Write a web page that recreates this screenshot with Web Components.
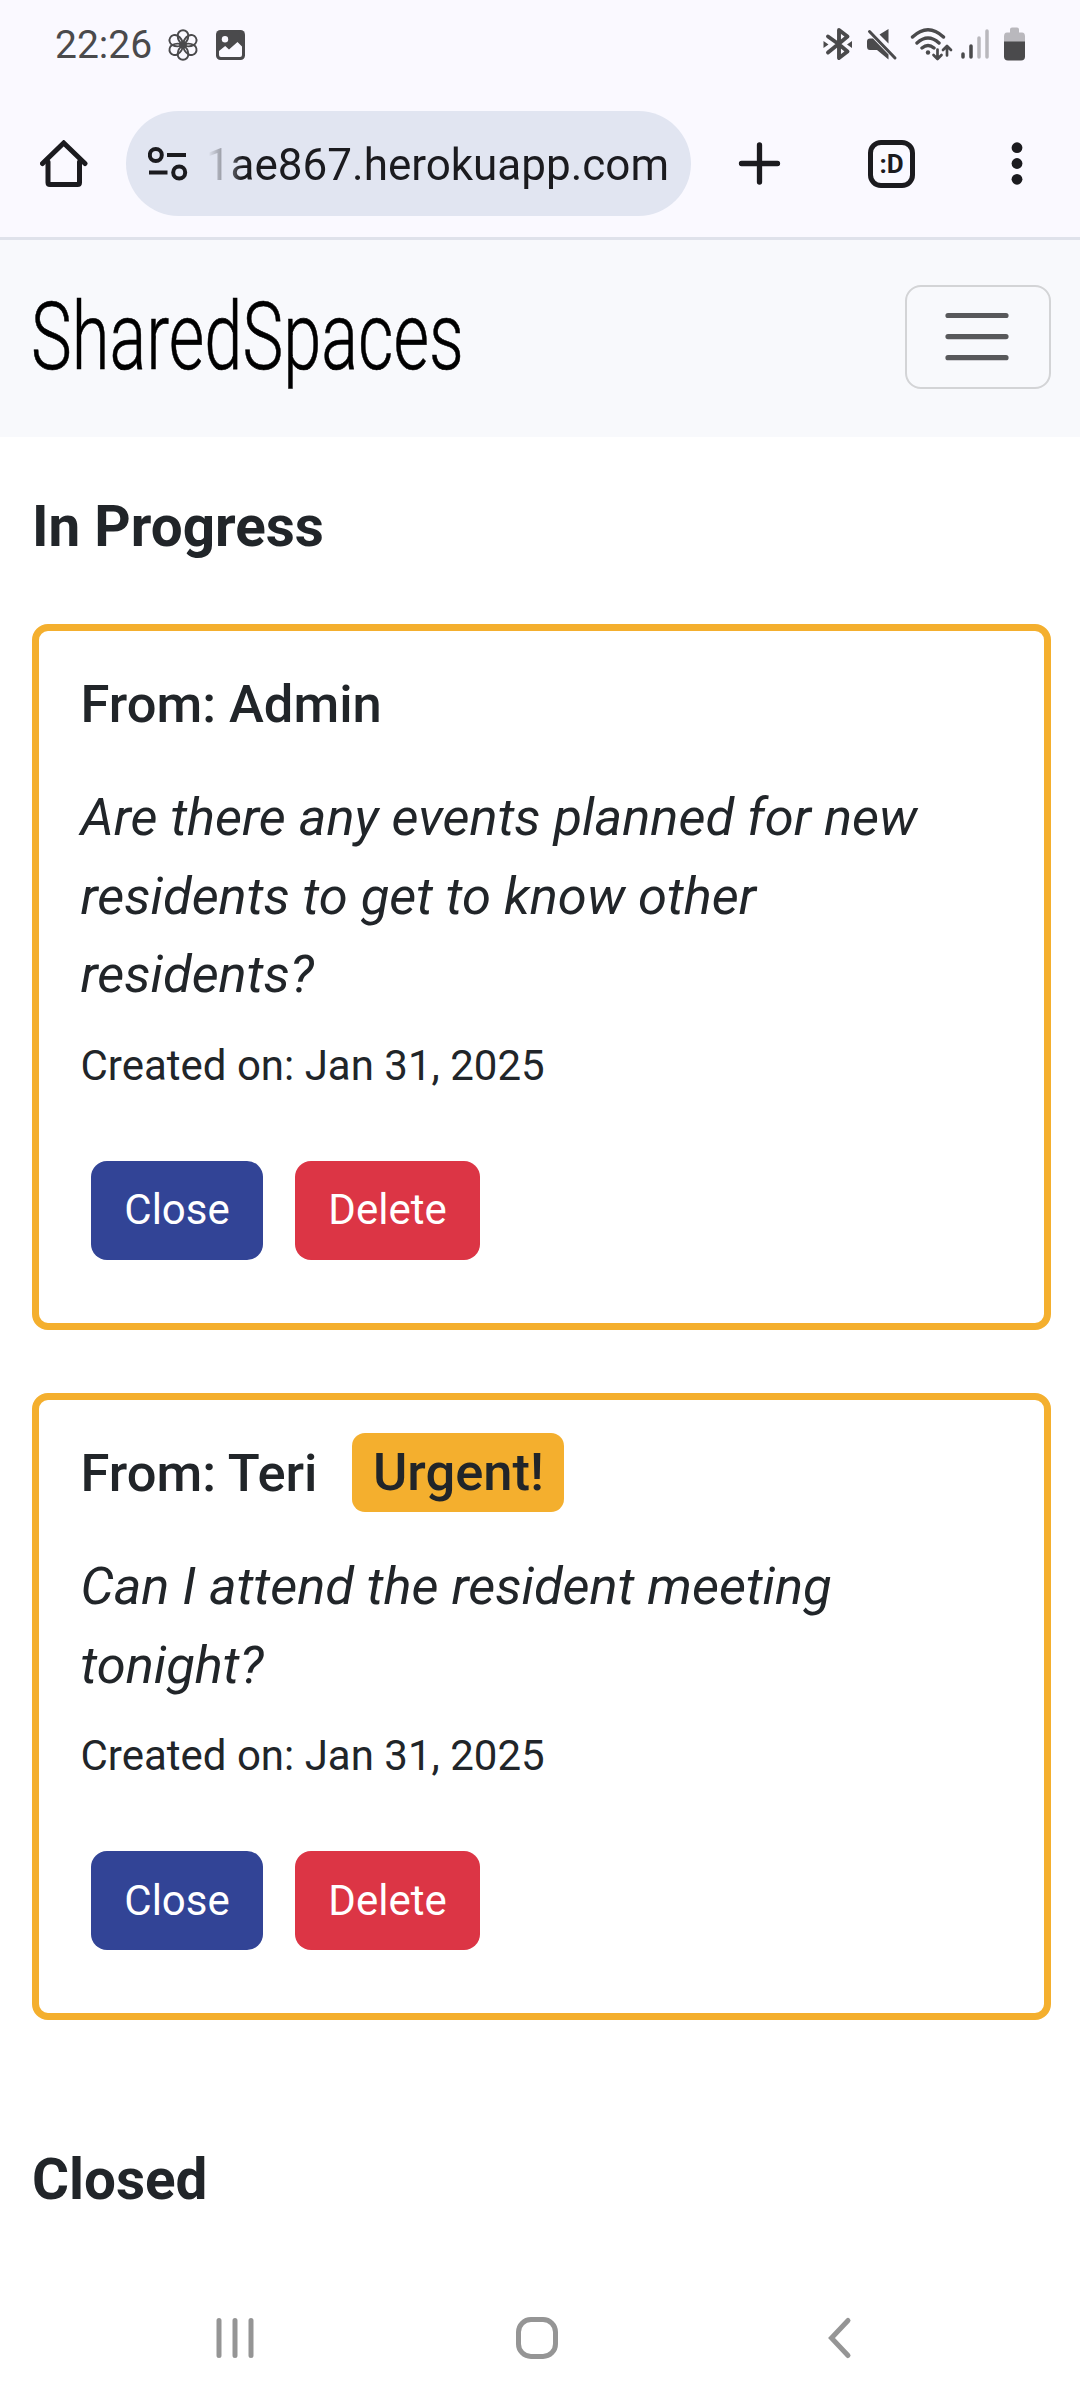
<!DOCTYPE html>
<html lang="en">
<head>
<meta charset="utf-8">
<title>SharedSpaces</title>
<style>
  html, body { margin: 0; background: #fff; }
  body { font-family: Roboto, "Liberation Sans", sans-serif; color: #212529; width: 1080px; height: 2400px; overflow: hidden; }
</style>
</head>
<body>
<phone-screen>
  <status-bar slot="top" time="22:26"></status-bar>
  <browser-bar slot="top">1ae867.herokuapp.com</browser-bar>
  <site-nav>SharedSpaces</site-nav>
  <section-title style="margin-top:55px">In Progress</section-title>
  <request-card author="Admin" date="Jan 31, 2025">Are there any events planned for new residents to get to know other residents?</request-card>
  <request-card author="Teri" date="Jan 31, 2025" urgent>Can I attend the resident meeting tonight?</request-card>
  <section-title style="margin-top:125px">Closed</section-title>
  <system-nav slot="bottom"></system-nav>
</phone-screen>

<script>
const define = (name, markup) => customElements.define(name, class extends HTMLElement {
  connectedCallback() {
    if (this.shadowRoot) return;
    const root = this.attachShadow({ mode: "open" });
    root.innerHTML = typeof markup === "function" ? markup(this) : markup;
  }
});

define("phone-screen", `
<style>
  :host { display: flex; flex-direction: column; height: 2400px; }
  main { flex: 1; min-height: 0; overflow: hidden; }
</style>
<slot name="top"></slot><main><slot></slot></main><slot name="bottom"></slot>`);

define("status-bar", el => `
<style>
  :host { display: flex; height: 88px; box-sizing: border-box; padding: 0 54px 0 55px; background: #faf9ff; color: #4a4a4c; align-items: center; }
  .time { font-size: 39px; line-height: 46px; margin-right: 16px; padding-top: 2px; width: 96px; white-space: nowrap; }
  svg { display: block; flex: none; }
  .gap { flex: 1; }
</style>
<span class="time">${el.getAttribute("time")}</span>
<svg width="32" height="34" viewBox="-16 -18 32 34" fill="none" stroke="#4a4a4c" stroke-width="1.9">
  ${[0, 60, 120, 180, 240, 300].map(a => `<path transform="rotate(${a})" d="M0 0C-4.500-3-5.300-6-5.300-9.500A5.300 5.300 0 0 1 5.300-9.500C5.300-6 4.500-3 0 0Z"/>`).join("")}
  <circle r="3"/>
</svg>
<svg style="margin-left:17px;margin-top:1px" width="29" height="30" viewBox="0 0 29 30">
  <rect width="29" height="30" rx="4.500" fill="#4a4a4c"/>
  <circle cx="9" cy="9.300" r="3.200" fill="#faf9ff"/>
  <path d="M3 21L9.200 16L13 19.500L21.500 12L26 16.500V25Q26 27 24 27H5Q3 27 3 25Z" fill="#faf9ff"/>
</svg>
<span class="gap"></span>
<svg width="203" height="36" viewBox="823 26.500 203 36" fill="none" stroke="#4a4a4c" stroke-width="3.500" stroke-linecap="round" stroke-linejoin="round">
  <path d="M828 37L838.500 44.500L847.500 52L839 58.500V30.500L847.500 37L838.500 44.500L828 53" stroke-width="3.900"/>
  <path d="M823.500 41.500L828.500 45L823.500 48.500ZM852 41.500L847 45L852 48.500Z" fill="#4a4a4c" stroke="none"/>
  <path d="M869.500 32L895 58.500" stroke-width="3"/>
  <path d="M888.500 29.500V44L879.500 35ZM870 39H873L888.500 55V60L877 50.500H870Q867 50.500 867 47V42Q867 39 870 39Z" fill="#4a4a4c" stroke="none"/>
  <path d="M912.500 37.500Q928 23 943.500 37.500M917 43.500Q928 33.500 939 43.500M922 48.500Q928 43.500 934 48.500" stroke-width="3.400"/>
  <circle cx="928" cy="53" r="2.200" fill="#4a4a4c" stroke="none"/>
  <path d="M937.500 50V59M933.500 55.500L937.500 59.500L941.500 55.500M947 56V47M943 50.500L947 46.500L951 50.500" stroke-width="2.700"/>
  <path d="M963 54.500V57.500M971 46.500V57.500" stroke-width="3.500"/>
  <path d="M979 38.500V57.500M987 31.500V57.500" stroke-width="3.500" stroke="#b9b8bd"/>
  <path d="M1010 30Q1010 28 1012 28H1017Q1019 28 1019 30V33H1022Q1025 33 1025 37V43H1004V37Q1004 33 1007 33H1010Z" fill="#b9b8bd" stroke="none"/>
  <path d="M1004 42H1025V57Q1025 61 1021 61H1008Q1004 61 1004 57Z" fill="#4a4a4c" stroke="none"/>
</svg>`);

define("browser-bar", `
<style>
  :host { display: flex; align-items: flex-start; height: 152px; box-sizing: border-box; padding: 23px 57px 0 40px; background: #faf9ff; border-bottom: 3px solid #dfe2eb; color: #1b1b1f; }
  svg { display: block; flex: none; }
  .pill { margin-left: 38px; width: 565px; height: 105px; border-radius: 53px; background: #e1e5f1; display: flex; align-items: center; box-sizing: border-box; padding-left: 22px; }
  .url { margin-left: 20px; padding-top: 3px; width: 461px; overflow: hidden; display: flex; justify-content: flex-end; font-size: 44px; line-height: 60px; white-space: nowrap; -webkit-mask: linear-gradient(90deg, transparent 0, #0004 10px, #0006 16px, #000 34px); mask: linear-gradient(90deg, transparent 0, #0004 10px, #0006 16px, #000 34px); }
  .icon { margin-top: 29px; }
  .tabs { margin: 29px 0 0 86px; width: 47px; height: 48px; box-sizing: border-box; border: 5.300px solid #1b1b1f; border-radius: 13px; font-size: 26px; font-weight: 700; line-height: 39px; text-align: center; }
</style>
<svg class="icon" width="48" height="48" viewBox="0 0 48 48" fill="none" stroke="#1b1b1f" stroke-width="5" stroke-linejoin="round" stroke-linecap="round"><path d="M8 22V42.500Q8 44.500 10 44.500H37.500Q39.500 44.500 39.500 42.500V22"/><path d="M2.500 23.500L23.700 3L45 23.500" stroke-linejoin="miter"/></svg>
<div class="pill">
  <svg width="40" height="34" viewBox="0 0 40 34" fill="none" stroke="#1b1b1f" stroke-width="4"><circle cx="7.800" cy="8" r="6"/><path d="M19 8H38M1 25.500H19.500"/><circle cx="31.200" cy="25.500" r="6"/></svg>
  <div class="url"><slot></slot></div>
</div>
<svg class="icon" style="margin-left:47px" width="44" height="48" viewBox="0 0 44 48" stroke="#1b1b1f" stroke-width="5.300" stroke-linecap="round"><path d="M3.500 23.500H39.500M21.500 5V42"/></svg>
<div class="tabs">:D</div>
<svg class="icon" style="margin-left:96px" width="12" height="48" viewBox="0 0 12 48" fill="#1b1b1f"><circle cx="6" cy="7.700" r="5.400"/><circle cx="6" cy="23.500" r="5.400"/><circle cx="6" cy="39.300" r="5.400"/></svg>`);

define("site-nav", `
<style>
  :host { display: flex; justify-content: space-between; align-items: flex-start; height: 197px; box-sizing: border-box; padding: 45px 29px 0 31px; background: #f8f9fc; }
  .brand { width: 440px; height: 104px; color: #000; font-family: Roboto; font-weight: 300; font-size: 95px; line-height: 104px; white-space: nowrap; transform: scaleX(.723); transform-origin: 0 0; -webkit-text-stroke: .6px #000; }
  button { all: unset; width: 146px; height: 104px; box-sizing: border-box; border: 2px solid #d3d4d6; border-radius: 16px; display: flex; align-items: center; justify-content: center; }
  svg { margin-right: 1.500px; margin-top: -1px; }
</style>
<div class="brand"><slot></slot></div>
<button aria-label="Menu"><svg width="64" height="50" viewBox="0 0 64 50" stroke="#58595b" stroke-width="5.200" stroke-linecap="round"><path d="M3 3.500H61M3 24.600H61M3 45.700H61"/></svg></button>`);

define("section-title", `
<style>
  :host { display: block; margin-left: 32px; height: 69px; }
  h2 { margin: 0; font-size: 56.600px; line-height: 70px; font-weight: 700; }
</style>
<h2><slot></slot></h2>`);

define("request-card", el => `
<style>
  :host { display: block; box-sizing: border-box; margin: 63px 29px 0 32px; padding: 42px 52px 63px 41.500px; border: 7px solid #f4af2e; border-radius: 16px; }
  header { display: flex; align-items: center; height: 63px; }
  h5 { margin: 0; font-size: 52.500px; line-height: 63px; font-weight: 500; white-space: nowrap; }
  .badge { height: 79px; box-sizing: border-box; margin: -2px 0 0 35px; padding: 0 20.500px; border-radius: 13px; background: #f4af2e; font-size: 52.500px; line-height: 78px; font-weight: 500; }
  p { margin: 42px 0 0; font-size: 52.500px; line-height: 78.660px; font-style: italic; }
  .date { margin-top: 20px; font-size: 42px; line-height: 63px; }
  .actions { display: flex; gap: 32px; margin: 64px 0 0 10.500px; }
  button { all: unset; box-sizing: border-box; height: 99px; padding: 0 33.300px; border-radius: 16px; color: #fff; font-size: 42px; line-height: 96px; }
  .close { background: #324496; }
  .delete { background: #dc3545; }
</style>
<header><h5>From: ${el.getAttribute("author")}</h5>${el.hasAttribute("urgent") ? '<span class="badge">Urgent!</span>' : ""}</header>
<p><slot></slot></p>
<div class="date">Created on: ${el.getAttribute("date")}</div>
<div class="actions"><button class="close">Close</button><button class="delete">Delete</button></div>`);

define("system-nav", `
<style>
  :host { display: flex; align-items: center; justify-content: space-between; height: 124px; box-sizing: border-box; padding: 0 226px 0 216px; background: #fff; }
  svg { display: block; }
</style>
<svg width="38" height="44" viewBox="0 0 38 44" stroke="#959595" stroke-width="5" stroke-linecap="round"><path d="M3 4.500V39.500M19 4.500V39.500M35 4.500V39.500"/></svg>
<svg style="margin-right:8px" width="42" height="42" viewBox="0 0 42 42" fill="none" stroke="#959595" stroke-width="5"><rect x="2.500" y="2.500" width="37" height="37" rx="12.500"/></svg>
<svg width="26" height="44" viewBox="0 0 26 44" fill="none" stroke="#959595" stroke-width="5" stroke-linecap="round"><path d="M20 4.500L3.500 22L20 39.500"/></svg>`);
</script>
</body>
</html>
